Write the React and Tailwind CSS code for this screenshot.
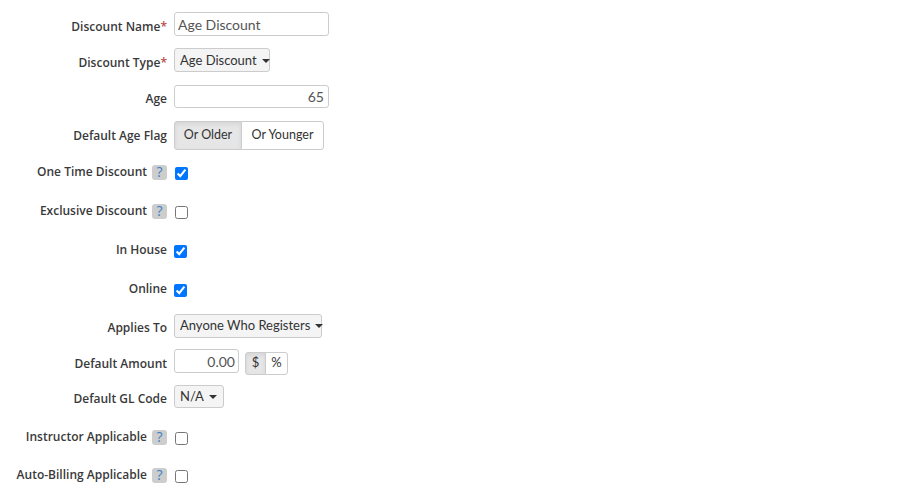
import { useState } from "react";

const labelFont = { fontFamily: '"Open Sans", "Liberation Sans", sans-serif' };

function Help() {
  return (
    <span className="ml-[5px] inline-flex h-[15px] w-[15px] items-center justify-center rounded-[3px] bg-[#cdcdcd] text-[14px] font-normal leading-none text-[#3b7fc4]">
      ?
    </span>
  );
}

function Label({ children, req, help, down }) {
  return (
    <div
      className={`flex w-[167px] shrink-0 items-center justify-end text-[12px] font-semibold text-[#3a3a3a] ${down ? "pt-[5px]" : ""}`}
      style={labelFont}
    >
      <span>{children}</span>
      {req && <span className="text-[#b94a48]">*</span>}
      {help && <Help />}
    </div>
  );
}

function Caret() {
  return <span className="ml-[5px] inline-block h-0 w-0 border-x-[4px] border-t-[4px] border-x-transparent border-t-[#333]" />;
}

function Select({ children, w }) {
  return (
    <button
      className={`flex h-[24px] items-center whitespace-nowrap rounded-[3px] border border-[#ccc] bg-[#f4f4f4] px-[5px] pt-[1px] text-[13px] text-[#333] ${w}`}
    >
      <span>{children}</span>
      <Caret />
    </button>
  );
}

function Check({ on }) {
  const [checked, setChecked] = useState(on);
  return (
    <input
      type="checkbox"
      checked={checked}
      onChange={() => setChecked(!checked)}
      className="m-0 h-[13px] w-[13px] translate-y-[1px]"
    />
  );
}

export default function App() {
  const [older, setOlder] = useState(true);
  return (
    <div
      className="min-h-screen w-full bg-white pt-[12px] text-[#333]"
      style={{ fontFamily: 'Lato, "Open Sans", sans-serif' }}
    >
      <div className="flex h-[24px] items-center gap-[7px]">
        <Label req down>Discount Name</Label>
        <input
          defaultValue="Age Discount"
          className="h-[24px] w-[155px] rounded-[3px] border border-[#ccc] px-[3px] text-[14px] text-[#555] outline-none"
        />
      </div>

      <div className="mt-[12px] flex h-[24px] items-center gap-[7px]">
        <Label req down>Discount Type</Label>
        <Select w="w-[96px]">Age Discount</Select>
      </div>

      <div className="mt-[13px] flex h-[23px] items-center gap-[7px]">
        <Label down>Age</Label>
        <input
          defaultValue="65"
          className="h-[23px] w-[155px] rounded-[3px] border border-[#ccc] px-[4px] text-right text-[14px] text-[#555] outline-none"
        />
      </div>

      <div className="mt-[13px] flex h-[29px] items-center gap-[7px]">
        <Label>Default Age Flag</Label>
        <div className="flex h-[29px] text-[12.5px] text-[#333]">
          <button
            onClick={() => setOlder(true)}
            className={`w-[68px] rounded-l-[3px] border border-[#ccc] ${older ? "bg-[#e6e6e6] shadow-[inset_0_2px_4px_rgba(0,0,0,0.08)]" : "bg-white"}`}
          >
            Or Older
          </button>
          <button
            onClick={() => setOlder(false)}
            className={`-ml-px w-[83px] rounded-r-[3px] border border-[#ccc] ${!older ? "bg-[#e6e6e6]" : "bg-white"}`}
          >
            Or Younger
          </button>
        </div>
      </div>

      <div className="mt-[10px] flex h-[24px] items-center gap-[8px]">
        <Label help>One Time Discount</Label>
        <Check on />
      </div>
      <div className="mt-[15px] flex h-[24px] items-center gap-[8px]">
        <Label help>Exclusive Discount</Label>
        <Check on={false} />
      </div>
      <div className="mt-[15px] flex h-[24px] items-center gap-[7px]">
        <Label>In House</Label>
        <Check on />
      </div>
      <div className="mt-[15px] flex h-[24px] items-center gap-[7px]">
        <Label>Online</Label>
        <Check on />
      </div>

      <div className="mt-[13px] flex h-[23px] items-center gap-[7px]">
        <Label down>Applies To</Label>
        <Select w="w-[148px]">Anyone Who Registers</Select>
      </div>

      <div className="mt-[12px] flex h-[24px] items-center gap-[7px]">
        <Label down>Default Amount</Label>
        <input
          defaultValue="0.00"
          className="h-[24px] w-[65px] rounded-[3px] border border-[#ccc] px-[3px] text-right text-[14px] text-[#555] outline-none"
        />
        <div className="ml-[-1px] flex h-[23px] translate-y-[2px] text-[13px]">
          <button className="w-[21px] rounded-l-[3px] border border-[#ccc] bg-[#e6e6e6] shadow-[inset_0_2px_4px_rgba(0,0,0,0.08)]">
            $
          </button>
          <button className="-ml-px w-[23px] rounded-r-[3px] border border-[#ccc] bg-white">
            %
          </button>
        </div>
      </div>

      <div className="mt-[12px] flex h-[23px] items-center gap-[7px]">
        <Label down>Default GL Code</Label>
        <button className="flex h-[23px] w-[50px] items-center justify-between rounded-[3px] border border-[#ccc] bg-[#f4f4f4] pl-[5px] pr-[6px] text-[13px] text-[#333]">
          <span>N/A</span>
          <span className="inline-block h-0 w-0 border-x-[4px] border-t-[4px] border-x-transparent border-t-[#333]" />
        </button>
      </div>

      <div className="mt-[17px] flex h-[24px] items-center gap-[8px]">
        <Label help>Instructor Applicable</Label>
        <Check on={false} />
      </div>
      <div className="mt-[14px] flex h-[24px] items-center gap-[8px]">
        <Label help>Auto-Billing Applicable</Label>
        <Check on={false} />
      </div>
    </div>
  );
}
